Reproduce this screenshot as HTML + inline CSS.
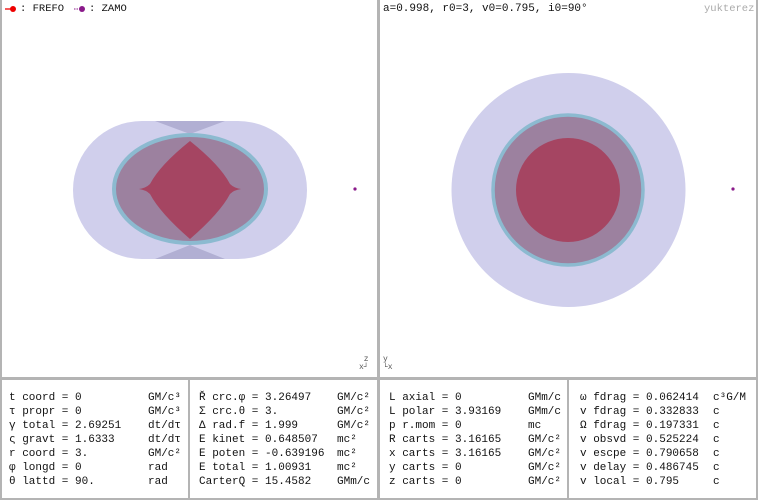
<!DOCTYPE html>
<html><head><meta charset="utf-8"><style>
body{margin:0;width:758px;height:500px;background:#fff;position:relative;overflow:hidden;font-family:"Liberation Mono","DejaVu Sans Mono",monospace;font-size:11px;color:#111}
.b{position:absolute;background:#b4b4b4}
.t{position:absolute;white-space:pre;line-height:14px}
</style></head><body>
<div class="b" style="left:0;top:0;width:2px;height:500px"></div>
<div class="b" style="left:756px;top:0;width:2px;height:500px"></div>
<div class="b" style="left:377px;top:0;width:3px;height:500px"></div>
<div class="b" style="left:0;top:377px;width:758px;height:3px"></div>
<div class="b" style="left:0;top:498px;width:758px;height:2px"></div>
<div class="b" style="left:188px;top:380px;width:2px;height:120px"></div>
<div class="b" style="left:567px;top:380px;width:2px;height:120px"></div>

<svg style="position:absolute;left:0;top:0" width="758" height="378">
 <path d="M142 121 H238 A69 69 0 0 1 238 259 H142 A69 69 0 0 1 142 121Z" fill="#d0cfec"/>
 <path d="M155 121 L225 121 L190 134Z M155 259 L225 259 L190 245Z" fill="#b1afd3"/>
 <ellipse cx="190" cy="189" rx="76" ry="54" fill="#9c819f" stroke="#8cbad0" stroke-width="4"/>
 <path d="M190 141 Q220 165 230 184 Q234 188 241 189 Q234 190 230 194 Q220 213 190 239 Q160 213 150 194 Q146 190 139 189 Q146 188 150 184 Q160 165 190 141Z" fill="#a54562"/>
 <circle cx="355" cy="189" r="1.6" fill="#8a1a8a"/>

 <circle cx="568.5" cy="190" r="117" fill="#d0cfec"/>
 <circle cx="568" cy="190" r="75" fill="#9c819f" stroke="#8cbad0" stroke-width="3.5"/>
 <circle cx="568" cy="190" r="52" fill="#a54562"/>
 <circle cx="733" cy="189" r="1.6" fill="#8a1a8a"/>

 <line x1="5" y1="9" x2="13" y2="9" stroke="#e00" stroke-width="1.3"/>
 <circle cx="13" cy="9" r="3" fill="#e00"/>
 <line x1="74" y1="9" x2="82" y2="9" stroke="#8a1a8a" stroke-width="1" stroke-dasharray="1.5 1"/>
 <circle cx="82" cy="9" r="3" fill="#8a1a8a"/>
</svg>
<div class="t" style="left:20px;top:2px;font-size:10.5px">: FREFO</div>
<div class="t" style="left:89px;top:2px;font-size:10.5px">: ZAMO</div>
<div class="t" style="left:383px;top:2px">a=0.998, r0=3, v0=0.795, i0=90°</div>
<div class="t" style="left:704px;top:2px;color:#aaa;font-size:10.5px">yukterez</div>
<div class="t" style="left:359px;top:356px;font-size:8px;color:#555;line-height:8px"> z
x┘</div>
<div class="t" style="left:383px;top:356px;font-size:8px;color:#555;line-height:8px">y
└x</div>

<div class="t" style="left:9px;top:391px">t coord = 0
τ propr = 0
γ total = 2.69251
ς gravt = 1.6333
r coord = 3.
φ longd = 0
θ lattd = 90.</div>
<div class="t" style="left:148px;top:391px">GM/c³
GM/c³
dt/dτ
dt/dτ
GM/c²
rad
rad</div>
<div class="t" style="left:199px;top:391px">Ř crc.φ = 3.26497
Σ crc.θ = 3.
Δ rad.f = 1.999
E kinet = 0.648507
E poten = -0.639196
E total = 1.00931
CarterQ = 15.4582</div>
<div class="t" style="left:337px;top:391px">GM/c²
GM/c²
GM/c²
mc²
mc²
mc²
GMm/c</div>
<div class="t" style="left:389px;top:391px">L axial = 0
L polar = 3.93169
p r.mom = 0
R carts = 3.16165
x carts = 3.16165
y carts = 0
z carts = 0</div>
<div class="t" style="left:528px;top:391px">GMm/c
GMm/c
mc
GM/c²
GM/c²
GM/c²
GM/c²</div>
<div class="t" style="left:580px;top:391px">ω fdrag = 0.062414
v fdrag = 0.332833
Ω fdrag = 0.197331
v obsvd = 0.525224
v escpe = 0.790658
v delay = 0.486745
v local = 0.795</div>
<div class="t" style="left:713px;top:391px">c³G/M
c
c
c
c
c
c</div>
</body></html>
